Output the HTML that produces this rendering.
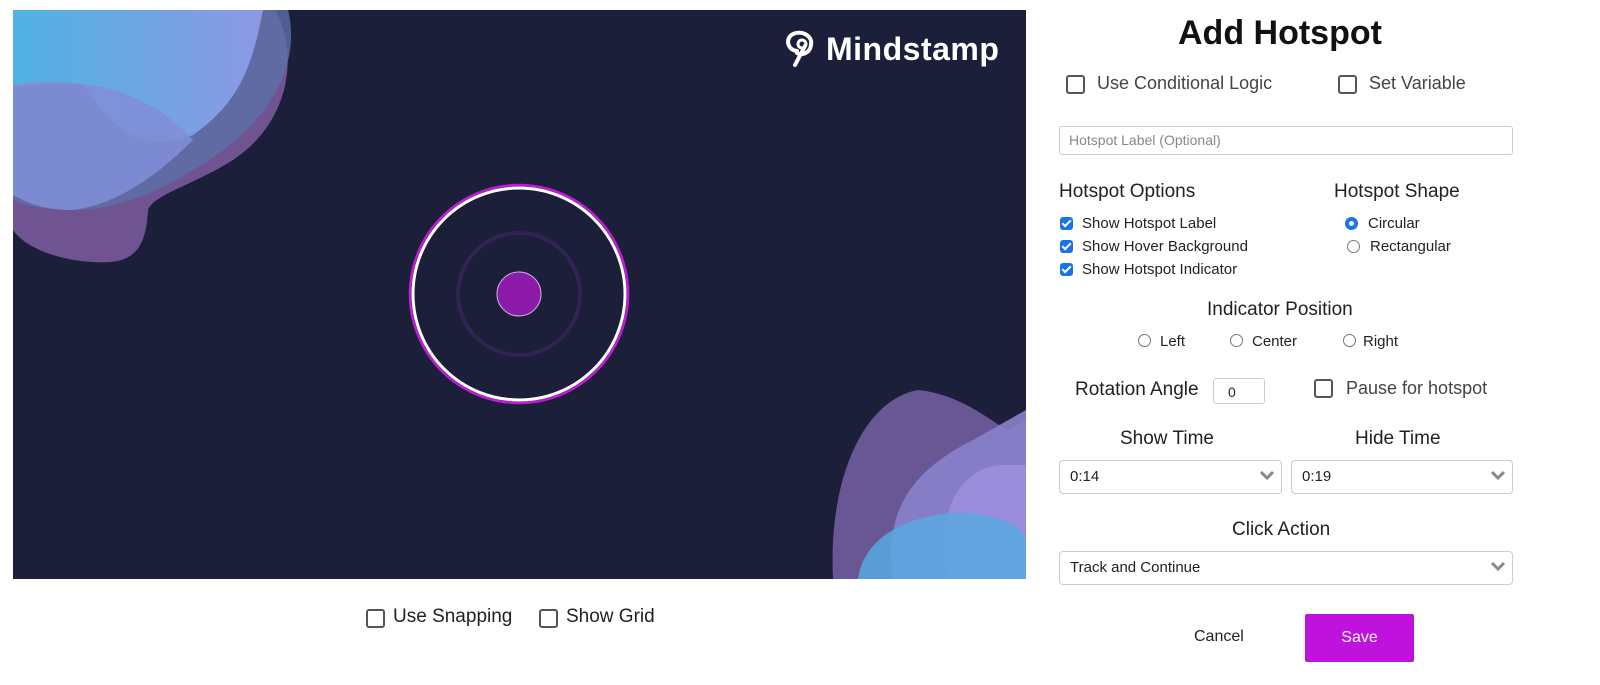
<!DOCTYPE html>
<html><head><meta charset="utf-8"><style>
*{box-sizing:border-box;margin:0;padding:0}
body{width:1600px;height:685px;background:#fff;font-family:"Liberation Sans",sans-serif;color:#222;position:relative;overflow:hidden}
.a{position:absolute;white-space:nowrap}
.cb{position:absolute;width:19px;height:19px;border:2px solid #555;border-radius:3px;background:#fff}
.ck{position:absolute;width:13px;height:13px;border-radius:3px;background:#1a73e8}
.ck:after{content:"";position:absolute;left:4px;top:1px;width:3px;height:7px;border:solid #fff;border-width:0 2px 2px 0;transform:rotate(45deg)}
.rd{position:absolute;width:13px;height:13px;border:1px solid #777;border-radius:50%;background:#fff}
.sel{position:absolute;border:1px solid #ccc;border-radius:4px;background:#fff;font-size:15px;padding-left:10px;line-height:32px}
.sel svg{position:absolute;right:6px;top:9px}
</style></head><body>
<svg class="a" style="left:13px;top:10px" width="1013" height="569" viewBox="0 0 1013 569">
<defs>
<linearGradient id="g1" x1="0" y1="0" x2="1" y2="0"><stop offset="0" stop-color="#4fb6e6"/><stop offset="1" stop-color="#8f9be8"/></linearGradient>
</defs>
<rect width="1013" height="569" fill="#1b1f3a"/>
<path d="M0 0H262C285 40 280 110 220 150C180 175 140 185 135 200C133 240 120 255 80 252C40 250 10 235 0 220Z" fill="#7a5a9c" opacity=".9"/>
<path d="M0 0H275C290 60 250 120 180 160C140 185 100 200 60 200C30 200 10 195 0 190Z" fill="#5c6fa8" opacity=".8"/>
<path d="M0 0H250C240 50 230 90 180 125C130 145 100 120 70 75C40 70 15 80 0 75Z" fill="url(#g1)" opacity=".95"/>
<path d="M0 75C30 70 60 70 100 80C150 95 170 120 180 130C140 170 100 195 60 200C25 200 10 190 0 185Z" fill="#7f8fd6" opacity=".9"/>
<path d="M820 569C815 470 850 390 905 380C950 385 975 410 995 420L1013 410V569Z" fill="#6e5a9a" opacity=".95"/>
<path d="M880 569C870 500 900 460 960 430L1013 400V569Z" fill="#8a82cc" opacity=".9"/>
<path d="M935 569C920 500 950 455 990 455H1013V569Z" fill="#9c90de" opacity=".9"/>
<path d="M845 569C850 530 890 505 945 503C990 503 1013 520 1013 530V569Z" fill="#58a8e0" opacity=".85"/>
<circle cx="506" cy="284" r="109" fill="none" stroke="#c21ad6" stroke-width="2.5"/>
<circle cx="506" cy="284" r="106" fill="none" stroke="#fff" stroke-width="3"/>
<circle cx="506" cy="284" r="61" fill="none" stroke="#2f2452" stroke-width="4"/>
<circle cx="506" cy="284" r="22" fill="#8b1aa8" stroke="#ccb0dd" stroke-width="1"/>
<g fill="none" stroke="#fff" stroke-width="4" stroke-linecap="round"><path d="M784 41C774 40 772 28 780 24C789 20 800 26 798 35C797 43 789 46 784 43"/><path d="M792 36L782 55"/><circle cx="789" cy="34" r="4" stroke-width="3"/></g>
<text x="813" y="50" fill="#fff" font-size="32" font-weight="bold" letter-spacing=".5" font-family="Liberation Sans,sans-serif">Mindstamp</text>
</svg>
<div class="cb" style="left:366px;top:609px"></div><div class="a" style="left:393px;top:606px;font-size:19px">Use Snapping</div>
<div class="cb" style="left:539px;top:609px"></div><div class="a" style="left:566px;top:606px;font-size:19px">Show Grid</div>

<div class="a" style="left:1178px;top:14px;font-size:34px;font-weight:bold;color:#111">Add Hotspot</div>
<div class="cb" style="left:1066px;top:75px"></div><div class="a" style="left:1097px;top:73px;font-size:18px;color:#444">Use Conditional Logic</div>
<div class="cb" style="left:1338px;top:75px"></div><div class="a" style="left:1369px;top:73px;font-size:18px;color:#444">Set Variable</div>
<div class="a" style="left:1059px;top:126px;width:454px;height:29px;border:1px solid #ccc;border-radius:3px;font-size:14px;color:#888;padding-left:9px;line-height:27px">Hotspot Label (Optional)</div>
<div class="a" style="left:1059px;top:181px;font-size:19px">Hotspot Options</div>
<div class="a" style="left:1334px;top:181px;font-size:19px">Hotspot Shape</div>
<div class="ck" style="left:1060px;top:217px"></div><div class="a" style="left:1082px;top:215px;font-size:15px">Show Hotspot Label</div>
<div class="ck" style="left:1060px;top:240px"></div><div class="a" style="left:1082px;top:238px;font-size:15px">Show Hover Background</div>
<div class="ck" style="left:1060px;top:263px"></div><div class="a" style="left:1082px;top:261px;font-size:15px">Show Hotspot Indicator</div>
<div class="rd" style="left:1345px;top:217px;border:4px solid #1a73e8"></div><div class="a" style="left:1368px;top:215px;font-size:15px">Circular</div>
<div class="rd" style="left:1347px;top:240px"></div><div class="a" style="left:1370px;top:238px;font-size:15px">Rectangular</div>
<div class="a" style="left:1207px;top:299px;font-size:19px">Indicator Position</div>
<div class="rd" style="left:1138px;top:334px"></div><div class="a" style="left:1160px;top:333px;font-size:15px">Left</div>
<div class="rd" style="left:1230px;top:334px"></div><div class="a" style="left:1252px;top:333px;font-size:15px">Center</div>
<div class="rd" style="left:1343px;top:334px"></div><div class="a" style="left:1363px;top:333px;font-size:15px">Right</div>
<div class="a" style="left:1075px;top:379px;font-size:19px">Rotation Angle</div>
<div class="a" style="left:1213px;top:378px;width:52px;height:26px;border:1px solid #ccc;border-radius:3px;font-size:14px;padding-left:14px;line-height:26px">0</div>
<div class="cb" style="left:1314px;top:379px"></div><div class="a" style="left:1346px;top:378px;font-size:18px;color:#444">Pause for hotspot</div>
<div class="a" style="left:1120px;top:428px;font-size:19px">Show Time</div>
<div class="a" style="left:1355px;top:428px;font-size:19px">Hide Time</div>
<div class="sel" style="left:1059px;top:460px;width:223px;height:34px">0:14<svg width="16" height="12"><path d="M2 2L8 8L14 2" fill="none" stroke="#888" stroke-width="3"/></svg></div>
<div class="sel" style="left:1291px;top:460px;width:222px;height:34px">0:19<svg width="16" height="12"><path d="M2 2L8 8L14 2" fill="none" stroke="#888" stroke-width="3"/></svg></div>
<div class="a" style="left:1232px;top:519px;font-size:19px">Click Action</div>
<div class="sel" style="left:1059px;top:551px;width:454px;height:34px">Track and Continue<svg width="16" height="12"><path d="M2 2L8 8L14 2" fill="none" stroke="#888" stroke-width="3"/></svg></div>
<div class="a" style="left:1194px;top:628px;font-size:16px">Cancel</div>
<div class="a" style="left:1305px;top:614px;width:109px;height:48px;background:#bf12dd;border-radius:2px;color:#fff;font-size:16px;text-align:center;line-height:48px">Save</div>
</body></html>
